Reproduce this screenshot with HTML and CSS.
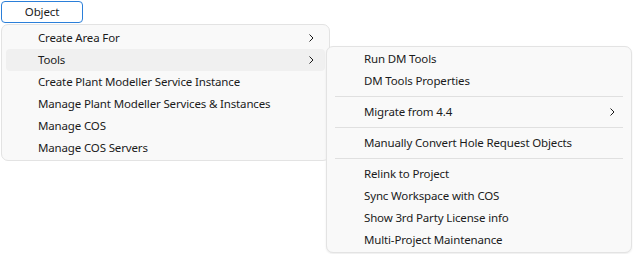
FILE: index.html
```html
<!DOCTYPE html>
<html lang="en">
<head>
<meta charset="utf-8">
<title>Object menu</title>
<link rel="stylesheet" href="styles.css">
</head>
<body>
<div class="bar">
  <button class="menu-button">Object</button>
</div>
<div class="menu main-menu">
  <div class="item"><span class="label">Create Area For</span><svg class="chev" width="5" height="8" viewBox="0 0 5 8"><polyline points="0.5,0.5 4,4 0.5,7.5" fill="none" stroke="#1b1b1b" stroke-width="1"/></svg></div>
  <div class="item active"><span class="label">Tools</span><svg class="chev" width="5" height="8" viewBox="0 0 5 8"><polyline points="0.5,0.5 4,4 0.5,7.5" fill="none" stroke="#1b1b1b" stroke-width="1"/></svg></div>
  <div class="item"><span class="label">Create Plant Modeller Service Instance</span></div>
  <div class="item"><span class="label">Manage Plant Modeller Services &amp; Instances</span></div>
  <div class="item"><span class="label">Manage COS</span></div>
  <div class="item"><span class="label">Manage COS Servers</span></div>
</div>
<div class="menu sub-menu">
  <div class="item"><span class="label">Run DM Tools</span></div>
  <div class="item"><span class="label">DM Tools Properties</span></div>
  <div class="sep"></div>
  <div class="item"><span class="label">Migrate from 4.4</span><svg class="chev" width="5" height="8" viewBox="0 0 5 8"><polyline points="0.5,0.5 4,4 0.5,7.5" fill="none" stroke="#1b1b1b" stroke-width="1"/></svg></div>
  <div class="sep"></div>
  <div class="item"><span class="label">Manually Convert Hole Request Objects</span></div>
  <div class="sep"></div>
  <div class="item"><span class="label">Relink to Project</span></div>
  <div class="item"><span class="label">Sync Workspace with COS</span></div>
  <div class="item"><span class="label">Show 3rd Party License info</span></div>
  <div class="item"><span class="label">Multi-Project Maintenance</span></div>
</div>
</body>
</html>
```
FILE: styles.css
```css
html, body {
  margin: 0;
  padding: 0;
  background: #ffffff;
}
body {
  font-family: "Noto Sans", "Open Sans", sans-serif;
  font-size: 11.5px;
  letter-spacing: -0.15px;
  color: #1b1b1b;
  width: 633px;
  height: 254px;
  overflow: hidden;
  position: relative;
}
.bar {
  padding: 1px 0 0 1px;
}
.menu-button {
  display: block;
  width: 82px;
  height: 22px;
  box-sizing: border-box;
  border: 1px solid #2b7fd9;
  border-radius: 4px;
  background: #ffffff;
  font-family: inherit;
  font-size: 11.5px;
  letter-spacing: -0.15px;
  color: #1b1b1b;
  padding: 0 0 1px;
  line-height: 19px;
}
.menu {
  position: absolute;
  box-sizing: border-box;
  background: #f9f9f9;
  border: 1px solid #e3e3e3;
  border-radius: 7px;
  display: flex;
  flex-direction: column;
}
.main-menu {
  left: 1px;
  top: 24px;
  width: 329px;
  height: 137px;
  padding: 2px 4px;
}
.sub-menu {
  left: 326px;
  top: 46px;
  width: 306px;
  height: 207px;
  padding: 1px 4px;
  box-shadow: 0 1px 2px rgba(0,0,0,0.08);
}
.item {
  height: 22px;
  box-sizing: border-box;
  flex: none;
  display: flex;
  align-items: center;
  padding: 0 11px 2px 32px;
  border-radius: 4px;
}
.sub-menu .item {
  padding-left: 33px;
  padding-right: 12px;
}
.item.active {
  background: #f0f0f0;
}
.label {
  flex: 1;
  white-space: nowrap;
}
.chev {
  display: block;
  flex: none;
  margin-top: 2px;
}
.sep {
  flex: none;
  height: 9px;
  display: flex;
  align-items: center;
  padding: 0 4px;
}
.sep::before {
  content: "";
  display: block;
  flex: 1;
  height: 1px;
  background: #e0e0e0;
}
```
